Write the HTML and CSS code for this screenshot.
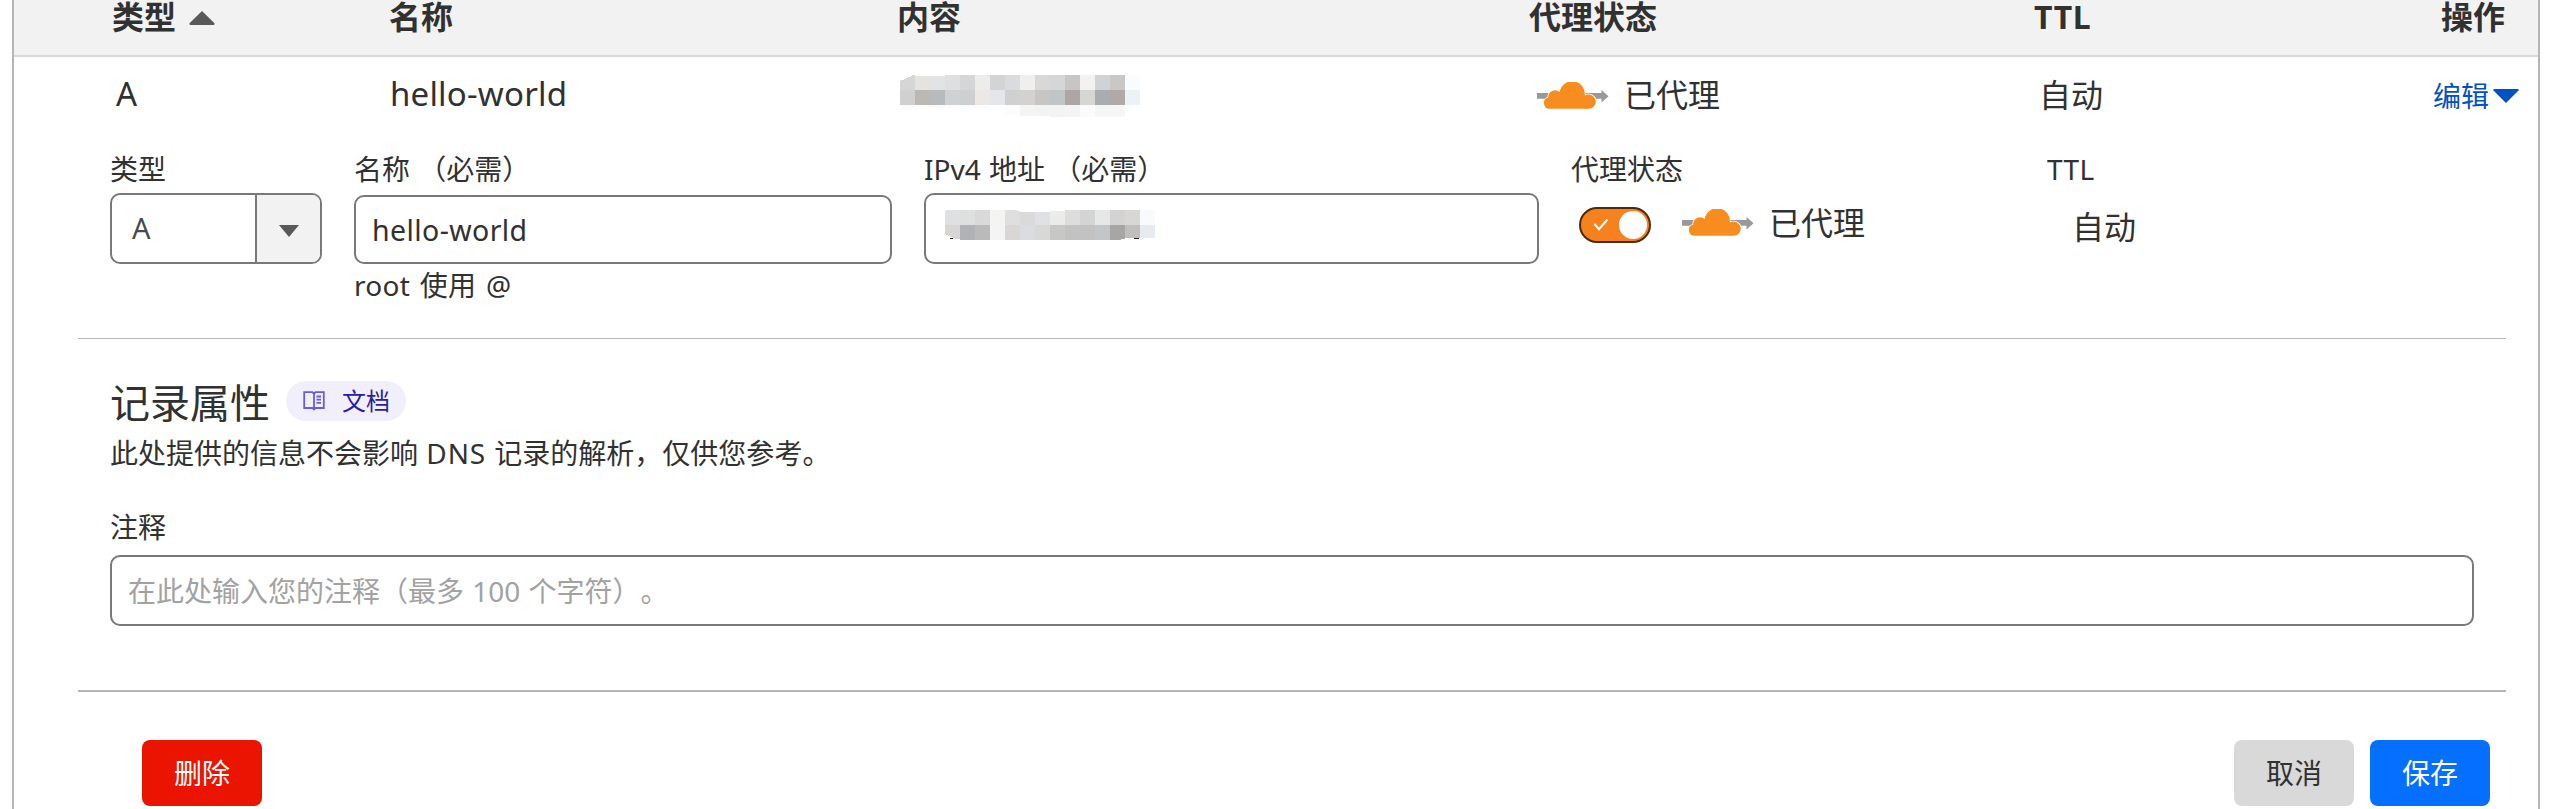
FILE: index.html
```html
<!DOCTYPE html>
<html lang="zh-CN">
<head>
<meta charset="utf-8">
<title>DNS</title>
<link rel="stylesheet" href="styles.css">
</head>
<body>
<svg width="0" height="0" class="defs" aria-hidden="true">
  <symbol id="cloud" viewBox="0 0 72 30">
    <path d="M0 11h64.500V8L71.500 14.200 64.500 20.500V16.800H0z" fill="#999"/>
    <path d="M12.800 26.800A5.700 5.700 0 0 1 11.200 15.600A7 7 0 0 1 22.700 10A12.600 12.600 0 0 1 47.700 13.600A7.400 7.400 0 0 1 58.800 19.800A7 7 0 0 1 51.800 26.800Z" fill="#f78c1f" stroke="#fff" stroke-width="1.600" paint-order="stroke"/>
  </symbol>
</svg>
<main class="panel">
  <div class="grid head">
    <div>类型<svg class="sort" width="26" height="14" viewBox="0 0 26 14"><path d="M13 0 25.500 12.300Q26 14 24.500 14H1.500Q0 14 .5 12.300Z" fill="#595959"/></svg></div>
    <div>名称</div><div>内容</div><div>代理状态</div><div class="lat">TTL</div><div>操作</div>
  </div>
  <div class="grid row">
    <div class="c-type">A</div>
    <div class="lat c-name">hello-world</div>
    <div class="c-content"><svg width="240" height="42" viewBox="0 0 240 42" shape-rendering="crispEdges">
      <path d="M0 6 12 1V0H15V15H0z" fill="#d6d6d6"/><path d="M15 1h15v14H15z" fill="#e4e3df"/><path d="M30 1h15v14H30z" fill="#e1e3e5"/><path d="M45 0h15v15H45z" fill="#dfdfe0"/><path d="M60 0h15v15H60z" fill="#d6d6d7"/><path d="M75 0h15v15H75z" fill="#ececea"/><path d="M90 0h15v15H90z" fill="#d4d4d4"/><path d="M105 0h15v15h-15z" fill="#dadbde"/><path d="M120 0h15v15h-15z" fill="#efefee"/><path d="M135 0h15v15h-15z" fill="#d8d8d9"/><path d="M150 0h15v15h-15z" fill="#d4d6d8"/><path d="M165 0h15v15h-15z" fill="#c8c6c4"/><path d="M180 0h15v15h-15z" fill="#f3f2f0"/><path d="M195 0h15v15h-15z" fill="#d0d3d5"/><path d="M210 0h15v15h-15z" fill="#c9c8c6"/><path d="M225 0h15v15h-15z" fill="#fafcff"/>
      <path d="M0 15h15v15H0z" fill="#d0d0d0"/><path d="M15 15h15v15H15z" fill="#bcb8b3"/><path d="M30 15h15v15H30z" fill="#b7bbbe"/><path d="M45 15h15v15H45z" fill="#d0d1d3"/><path d="M60 15h15v15H60z" fill="#cecfd1"/><path d="M75 15h15v15H75z" fill="#ede8e5"/><path d="M90 15h15v15H90z" fill="#e5e6eb"/><path d="M105 15h15v15h-15z" fill="#d0d0d0"/><path d="M120 15h15v15h-15z" fill="#d3d2d0"/><path d="M135 15h15v15h-15z" fill="#c7c6c4"/><path d="M150 15h15v15h-15z" fill="#c1c5c8"/><path d="M165 15h15v15h-15z" fill="#aca7a4"/><path d="M180 15h15v15h-15z" fill="#d6d6d4"/><path d="M195 15h15v15h-15z" fill="#a9adb0"/><path d="M210 15h15v15h-15z" fill="#afaaa7"/><path d="M225 15h15v15h-15z" fill="#edf2f6"/>
      <path d="M0 30h30v3L0 38z" fill="#fcfcfc"/><path d="M30 30h15v3H30z" fill="#f8f9f9"/><path d="M45 30h45v3l-30-1-15 1z" fill="#fcfcfc"/><path d="M105 30h15v10h-15z" fill="#fbfcfc"/><path d="M120 30h15v11h-15z" fill="#f4f4f3"/><path d="M135 30h30v12l-30-1z" fill="#f2f3f3"/><path d="M165 30h15v12h-15z" fill="#f4f4f4"/><path d="M180 30h15v12h-15z" fill="#fbfbfb"/><path d="M195 30h30v12h-30z" fill="#f6f6f6"/>
    </svg></div>
    <div class="c-proxy"><svg class="cloud" width="72" height="30"><use href="#cloud"/></svg><span>已代理</span></div>
    <div class="c-ttl">自动</div>
    <div class="c-edit"><a>编辑</a><svg width="26" height="14" viewBox="0 0 26 14"><path d="M13 14 .5 1.600Q-.2 0 1.300 0H24.700Q26.200 0 25.500 1.600Z" fill="#0051c3"/></svg></div>
  </div>
  <form class="form">
    <div class="fields">
      <div class="field f-type">
        <label>类型</label>
        <div class="select"><span>A</span><i><svg width="20" height="12" viewBox="0 0 20 12"><path d="M0 0h20L10 12z" fill="#595959"/></svg></i></div>
      </div>
      <div class="field f-name">
        <label>名称 （必需）</label>
        <div class="box lat short">hello-world</div>
        <p class="hint">root 使用 @</p>
      </div>
      <div class="field f-ip">
        <label>IPv4 地址 （必需）</label>
        <div class="box"><svg width="210" height="30" viewBox="0 0 210 30" shape-rendering="crispEdges">
          <path d="M5 28h3v1H5zM188 28h6l-1 1h-4z" fill="#222"/>
          <path d="M0 1 2 0H15V15H0z" fill="#dfe0e2"/><path d="M15 0h15v15H15z" fill="#dedfdf"/><path d="M30 0h15v15H30z" fill="#d9d9da"/><path d="M45 0h15v15H45z" fill="#f4f4f3"/><path d="M60 0h8l7 1v14H60z" fill="#dfdfe0"/><path d="M75 2h15v13H75z" fill="#dadada"/><path d="M90 2h15v13H90z" fill="#dfe1e4"/><path d="M105 1h15v14h-15z" fill="#ebebe9"/><path d="M120 0h15v15h-15z" fill="#dddddd"/><path d="M135 0h15v15h-15z" fill="#d4d4d4"/><path d="M150 0h15v15h-15z" fill="#e6e8e8"/><path d="M165 0h15v15h-15z" fill="#d3d3d3"/><path d="M180 0h15v15h-15z" fill="#d8d7d5"/><path d="M195 0h15v15h-15z" fill="#f8fafd"/>
          <path d="M0 15h15v14h-4L0 24z" fill="#d7d6d4"/><path d="M15 15h15v15H15z" fill="#b1b2b5"/><path d="M30 15h15v15H30z" fill="#bababa"/><path d="M45 15h15v15H45z" fill="#f4f4f4"/><path d="M60 15h15v15H60z" fill="#d8d7d5"/><path d="M75 15h15v15H75z" fill="#dadce0"/><path d="M90 15h15v15H90z" fill="#d8d8d6"/><path d="M105 15h15v15h-15z" fill="#c7c7c5"/><path d="M120 15h30v15h-30z" fill="#c2c2c2"/><path d="M150 15h15v15h-15z" fill="#c3c5c8"/><path d="M165 15h15v14l-8 1h-7z" fill="#a7a6a4"/><path d="M180 15h15v13h-15z" fill="#c1bfbb"/><path d="M195 15h15v13h-15z" fill="#e7ebef"/>
        </svg></div>
      </div>
      <div class="field f-proxy">
        <label>代理状态</label>
        <div class="proxy-line">
          <span class="toggle"><svg width="16" height="14" viewBox="0 0 16 14"><path d="M1.500 6 6 11.200 14.500 1.500" fill="none" stroke="#fff" stroke-width="2"/></svg><b></b></span>
          <svg class="cloud" width="72" height="30"><use href="#cloud"/></svg><span>已代理</span>
        </div>
      </div>
      <div class="field f-ttl">
        <label class="lat">TTL</label>
        <div class="ttl-value">自动</div>
      </div>
    </div>
    <section class="attrs">
      <div class="title-line">
        <h2>记录属性</h2>
        <span class="pill"><svg width="22" height="20" viewBox="0 0 22 20"><path d="M11 18.500V2.500L9.500 1.200H1.200V17H9.500L11 18.500 12.500 17H20.800V1.200H12.500L11 2.500M13.500 5.500h4.500M13.500 8.700h4.500M13.500 11.900h4.500" fill="none" stroke="#6a5be0" stroke-width="1.800"/></svg>文档</span>
      </div>
      <p class="desc">此处提供的信息不会影响 <span class="dns">DNS</span> 记录的解析，仅供您参考。</p>
      <label>注释</label>
      <div class="box comment">在此处输入您的注释（最多 100 个字符）。</div>
    </section>
    <div class="actions">
      <span class="btn danger">删除</span>
      <span class="btn neutral">取消</span>
      <span class="btn primary">保存</span>
    </div>
  </form>
</main>
</body>
</html>
```
FILE: styles.css
```css
* { box-sizing: border-box; }
body {
  margin: 0;
  height: 809px;
  overflow: hidden;
  background: #fff;
  color: #313131;
  font: 28px/40px "Noto Sans", "Noto Sans CJK SC", sans-serif;
  text-spacing-trim: space-all;
  word-spacing: 1px;
}
.defs { position: absolute; }
p, h2 { margin: 0; font-weight: 400; }
label { display: block; white-space: pre; }
svg { display: block; flex: none; }
.lat { letter-spacing: 0.4px; }

.panel {
  margin: 0 16px 0 12px;
  height: 809px;
  border: solid #b6b6b6;
  border-width: 0 2px;
}
.grid {
  display: grid;
  grid-template-columns: 277px 508px 632px 504px 408px 1fr;
  padding-left: 98px;
  white-space: nowrap;
}
.head {
  height: 57px;
  background: #f2f2f2;
  border-bottom: 2px solid #d9d9d9;
  font-size: 32px;
  font-weight: 700;
  line-height: 33px;
}
.head > div { display: flex; }
.head .lat { padding-left: 1px; letter-spacing: 0.6px; }
.sort { margin: 11px 0 0 13px; }
.row {
  height: 92px;
  font-size: 32px;
  line-height: 76px;
}
.c-type { padding-left: 4px; font-size: 33px; line-height: 74px; }
.c-name { padding-left: 1px; font-size: 33px; line-height: 74px; letter-spacing: 0.2px; }
.c-content { padding: 18px 0 0 3px; }
.c-proxy { display: flex; padding-left: 8px; }
.c-proxy .cloud { margin: 25px 15px 0 0; }
.c-ttl { padding-left: 6px; }
.c-edit { display: flex; margin-left: -8px; color: #0051c3; font-size: 28px; line-height: 78px; }
.c-edit svg { margin: 32px 0 0 4px; }

.form { margin: 0 32px 0 64px; }
.fields {
  display: flex;
  height: 190px;
  padding-left: 32px;
  border-bottom: 1px solid #b6b6b6;
}
.field label { height: 44px; }
.f-type { width: 212px; margin-right: 32px; }
.f-name { width: 538px; margin-right: 32px; }
.f-ip { width: 615px; margin-right: 32px; }
.f-proxy { width: 476px; }
.box, .select {
  display: flex;
  align-items: center;
  height: 71px;
  border: 2px solid #797979;
  border-radius: 10px;
  background: #fff;
}
.box { padding-left: 16px; }
.f-ip .box { padding: 0 0 7px 19px; }
.box.short { height: 69px; margin-top: 2px; font-size: 28.5px; }
.select { color: #4a4a4a; overflow: hidden; }
.select span { flex: 1; padding: 0 0 2px 20px; font-size: 29px; }
.select i {
  display: flex;
  align-items: center;
  justify-content: center;
  width: 65px;
  height: 100%;
  border-left: 2px solid #797979;
  background: #f2f2f2;
}
.select i svg { margin-top: 4px; }
.hint { margin-top: 1px; letter-spacing: 0.3px; word-spacing: 2px; }
.proxy-line { display: flex; padding-left: 8px; font-size: 32px; line-height: 59px; }
.proxy-line .cloud { margin: 16px 15px 0 31px; }
.toggle {
  display: flex;
  align-items: center;
  justify-content: space-between;
  width: 72px;
  height: 36px;
  margin-top: 14px;
  padding: 0 2px 0 12px;
  border: 2px solid #4e2a0b;
  border-radius: 18px;
  background: #f6821f;
}
.toggle b { width: 28px; height: 28px; border-radius: 50%; background: #fff; }
.ttl-value { padding-left: 25px; font-size: 32px; line-height: 68px; }

.attrs {
  height: 353px;
  padding: 38px 32px 0;
  border-bottom: 2px solid #b6b6b6;
}
.title-line { display: flex; height: 56px; }
h2 { font-size: 40px; line-height: 52px; }
.pill {
  display: flex;
  align-items: center;
  width: 120px;
  height: 40px;
  margin: 4px 0 0 16px;
  padding-left: 17px;
  border-radius: 20px;
  background: #f2effd;
  color: #2c1ba6;
  font-size: 24px;
}
.pill svg { margin-right: 17px; }
.desc { margin-bottom: 34px; }
.dns { letter-spacing: 0.9px; }
.comment { margin-top: 8px; color: #a2a2a2; }
.actions { display: flex; gap: 16px; padding: 48px 16px 0 64px; }
.btn {
  width: 120px;
  height: 66px;
  border-radius: 8px;
  color: #fff;
  line-height: 66px;
  text-align: center;
}
.danger { margin-right: auto; background: #eb1400; }
.neutral { background: #d9d9d9; color: #313131; }
.primary { background: #056fff; }
```
